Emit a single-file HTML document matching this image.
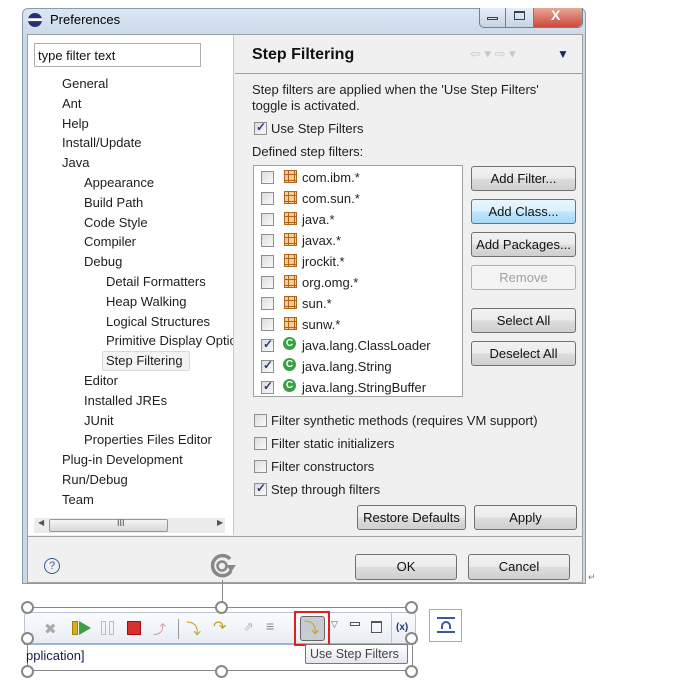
<!DOCTYPE html>
<html><head><meta charset="utf-8">
<style>
*{box-sizing:border-box;margin:0;padding:0}
body{width:676px;height:684px;background:#fff;position:relative;overflow:hidden;font-family:"Liberation Sans",sans-serif;font-size:13px;color:#1e1e1e}
.a{position:absolute;white-space:nowrap}
.btn{position:absolute;border:1px solid #707070;border-radius:3px;background:linear-gradient(#f2f2f2,#ebebeb 50%,#dddddd 51%,#cfcfcf);text-align:center;font-size:13px;color:#111}
.cb{position:absolute;width:13px;height:13px;border:1px solid #8e8f8f;background:linear-gradient(135deg,#dcdcdc,#fafafa);}
.cb.on::after{content:"✓";position:absolute;left:1px;top:-3px;font-size:12px;color:#2a3a8a;font-weight:bold}
.pk{position:absolute;width:13px;height:13px;border:1px solid #b0651a;background:#f2cd9a}
.pk::before{content:"";position:absolute;left:3px;top:-1px;width:5px;height:13px;border-left:1px solid #b0651a;border-right:1px solid #b0651a}
.pk::after{content:"";position:absolute;top:3px;left:-1px;height:5px;width:13px;border-top:1px solid #b0651a;border-bottom:1px solid #b0651a}
.cl{position:absolute;width:13px;height:13px;border-radius:50%;background:#3aa046;color:#fff;font-size:10px;font-weight:bold;line-height:13px;text-align:center}
.h{position:absolute;width:13px;height:13px;border:2px solid #888;border-radius:50%;background:#fff}
</style></head><body>
<div class="a" style="left:22px;top:8px;width:564px;height:576px;background:linear-gradient(#dbe6f3,#c9d7e8 30px,#c9d7e8);border:1px solid #8a9bb0;border-radius:6px 6px 0 0"></div>
<div class="a" style="left:28px;top:13px;width:14px;height:14px;border-radius:50%;background:linear-gradient(#2c2f6e 0,#2c2f6e 35%,#fff 40%,#fff 55%,#2c2f6e 60%)"></div>
<div class="a" style="left:50px;top:12px;font-size:13px;color:#000">Preferences</div>
<div class="a" style="left:479px;top:8px;width:104px;height:20px;border:1px solid #6f7f94;border-top:none;border-radius:0 0 5px 5px;background:linear-gradient(#e8eef6,#c7d3e2)"></div>
<div class="a" style="left:505px;top:8px;width:1px;height:19px;background:#6f7f94"></div>
<div class="a" style="left:533px;top:8px;width:1px;height:19px;background:#6f7f94"></div>
<div class="a" style="left:534px;top:8px;width:48px;height:19px;background:linear-gradient(#e8a898,#c9493a);border-radius:0 0 5px 0"></div>
<div class="a" style="left:487px;top:17px;width:11px;height:3px;border:1px solid #345"></div>
<div class="a" style="left:514px;top:11px;width:11px;height:9px;border:1px solid #345;border-top-width:2px"></div>
<div class="a" style="left:551px;top:7px;color:#fff;font-weight:bold;font-size:14px">X</div>
<div class="a" style="left:27px;top:34px;width:556px;height:549px;background:#f0f0f0;border:1px solid #a0a0a0"></div>
<div class="a" style="left:28px;top:35px;width:206px;height:500px;background:#fff;border-right:1px solid #c8c8c8"></div>
<div class="a" style="left:34px;top:43px;width:167px;height:24px;border:1px solid #abadb3;background:#fff;padding:4px 3px;font-size:13px;color:#111">type filter text</div>
<div class="a" style="left:0;top:1px;line-height:19.8px">
<div class="a" style="left:62px;top:73px">General</div>
<div class="a" style="left:62px;top:93px">Ant</div>
<div class="a" style="left:62px;top:113px">Help</div>
<div class="a" style="left:62px;top:132px">Install/Update</div>
<div class="a" style="left:62px;top:152px">Java</div>
<div class="a" style="left:84px;top:172px">Appearance</div>
<div class="a" style="left:84px;top:192px">Build Path</div>
<div class="a" style="left:84px;top:212px">Code Style</div>
<div class="a" style="left:84px;top:231px">Compiler</div>
<div class="a" style="left:84px;top:251px">Debug</div>
<div class="a" style="left:106px;top:271px">Detail Formatters</div>
<div class="a" style="left:106px;top:291px">Heap Walking</div>
<div class="a" style="left:106px;top:311px">Logical Structures</div>
<div class="a" style="left:106px;top:330px;width:127px;overflow:hidden">Primitive Display Options</div>
<div class="a" style="left:102px;top:350px;width:88px;height:20px;border:1px solid #d9d9d9;border-radius:2px;background:#f3f3f3"></div>
<div class="a" style="left:106px;top:350px">Step Filtering</div>
<div class="a" style="left:84px;top:370px">Editor</div>
<div class="a" style="left:84px;top:390px">Installed JREs</div>
<div class="a" style="left:84px;top:410px">JUnit</div>
<div class="a" style="left:84px;top:429px">Properties Files Editor</div>
<div class="a" style="left:62px;top:449px">Plug-in Development</div>
<div class="a" style="left:62px;top:469px">Run/Debug</div>
<div class="a" style="left:62px;top:489px">Team</div>
</div>
<div class="a" style="left:34px;top:518px;width:191px;height:15px;background:#ececec"></div>
<div class="a" style="left:38px;top:518px;font-size:8px;color:#555">◀</div>
<div class="a" style="left:217px;top:518px;font-size:8px;color:#555">▶</div>
<div class="a" style="left:49px;top:519px;width:119px;height:13px;border:1px solid #989898;border-radius:2px;background:linear-gradient(#f4f4f4,#d8d8d8)"></div>
<div class="a" style="left:117px;top:518px;font-size:9px;color:#444">III</div>
<div class="a" style="left:252px;top:46px;font-size:16px;font-weight:bold;color:#111">Step Filtering</div>
<div class="a" style="left:470px;top:46px;font-size:13px;color:#c8c8c8">⇦ ▾ ⇨ ▾</div>
<div class="a" style="left:557px;top:47px;font-size:12px;color:#1a2a5a">▼</div>
<div class="a" style="left:235px;top:73px;width:347px;height:1px;background:#a0a0a0"></div>
<div class="a" style="left:252px;top:82px;line-height:16px">Step filters are applied when the 'Use Step Filters'<br>toggle is activated.</div>
<div class="cb on" style="left:254px;top:122px"></div>
<div class="a" style="left:271px;top:121px">Use Step Filters</div>
<div class="a" style="left:252px;top:144px">Defined step filters:</div>
<div class="a" style="left:253px;top:165px;width:210px;height:232px;background:#fff;border:1px solid #a0a0a0"></div>
<div class="cb" style="left:261px;top:171px"></div><div class="pk" style="left:284px;top:170px"></div><div class="a" style="left:302px;top:170px">com.ibm.*</div>
<div class="cb" style="left:261px;top:192px"></div><div class="pk" style="left:284px;top:191px"></div><div class="a" style="left:302px;top:191px">com.sun.*</div>
<div class="cb" style="left:261px;top:213px"></div><div class="pk" style="left:284px;top:212px"></div><div class="a" style="left:302px;top:212px">java.*</div>
<div class="cb" style="left:261px;top:234px"></div><div class="pk" style="left:284px;top:233px"></div><div class="a" style="left:302px;top:233px">javax.*</div>
<div class="cb" style="left:261px;top:255px"></div><div class="pk" style="left:284px;top:254px"></div><div class="a" style="left:302px;top:254px">jrockit.*</div>
<div class="cb" style="left:261px;top:276px"></div><div class="pk" style="left:284px;top:275px"></div><div class="a" style="left:302px;top:275px">org.omg.*</div>
<div class="cb" style="left:261px;top:297px"></div><div class="pk" style="left:284px;top:296px"></div><div class="a" style="left:302px;top:296px">sun.*</div>
<div class="cb" style="left:261px;top:318px"></div><div class="pk" style="left:284px;top:317px"></div><div class="a" style="left:302px;top:317px">sunw.*</div>
<div class="cb on" style="left:261px;top:339px"></div><div class="cl" style="left:283px;top:337px">C</div><div class="a" style="left:302px;top:338px">java.lang.ClassLoader</div>
<div class="cb on" style="left:261px;top:360px"></div><div class="cl" style="left:283px;top:358px">C</div><div class="a" style="left:302px;top:359px">java.lang.String</div>
<div class="cb on" style="left:261px;top:381px"></div><div class="cl" style="left:283px;top:379px">C</div><div class="a" style="left:302px;top:380px">java.lang.StringBuffer</div>
<div class="btn" style="left:471px;top:166px;width:105px;height:25px;line-height:23px">Add Filter...</div>
<div class="btn" style="left:471px;top:199px;width:105px;height:25px;line-height:23px;border-color:#3c7fb1;background:linear-gradient(#eaf6fd,#d9f0fc 50%,#bee6fd 51%,#a7d9f5)">Add Class...</div>
<div class="btn" style="left:471px;top:232px;width:105px;height:25px;line-height:23px">Add Packages...</div>
<div class="btn" style="left:471px;top:265px;width:105px;height:25px;line-height:23px;background:#f4f4f4;border-color:#adb2b5;color:#a0a0a0">Remove</div>
<div class="btn" style="left:471px;top:308px;width:105px;height:25px;line-height:23px">Select All</div>
<div class="btn" style="left:471px;top:341px;width:105px;height:25px;line-height:23px">Deselect All</div>
<div class="cb" style="left:254px;top:414px"></div><div class="a" style="left:271px;top:413px">Filter synthetic methods (requires VM support)</div>
<div class="cb" style="left:254px;top:437px"></div><div class="a" style="left:271px;top:436px">Filter static initializers</div>
<div class="cb" style="left:254px;top:460px"></div><div class="a" style="left:271px;top:459px">Filter constructors</div>
<div class="cb on" style="left:254px;top:483px"></div><div class="a" style="left:271px;top:482px">Step through filters</div>
<div class="btn" style="left:357px;top:505px;width:109px;height:25px;line-height:23px">Restore Defaults</div>
<div class="btn" style="left:474px;top:505px;width:103px;height:25px;line-height:23px">Apply</div>
<div class="a" style="left:28px;top:536px;width:554px;height:1px;background:#a0a0a0"></div>
<div class="a" style="left:44px;top:558px;width:16px;height:16px;border:1px solid #3a5a9a;border-radius:50%;text-align:center;font-size:11px;line-height:14px;color:#3a5a9a">?</div>
<div class="btn" style="left:355px;top:554px;width:102px;height:26px;line-height:24px">OK</div>
<div class="btn" style="left:468px;top:554px;width:102px;height:26px;line-height:24px">Cancel</div>
<svg class="a" style="left:206px;top:551px" width="32" height="30" viewBox="0 0 32 30"><path d="M24 8 A10 10 0 1 0 25 20" fill="none" stroke="#888" stroke-width="3.5"/><circle cx="16" cy="15" r="4.5" fill="none" stroke="#888" stroke-width="2.5"/><path d="M20 14 L30 14 L25 21 Z" fill="#888"/></svg>
<div class="a" style="left:588px;top:572px;font-size:9px;color:#777">↵</div>
<div class="a" style="left:222px;top:580px;width:1px;height:27px;background:#888"></div>
<div class="a" style="left:27px;top:607px;width:386px;height:64px;border:1px solid #888"></div>
<div class="a" style="left:24px;top:612px;width:392px;height:32px;background:linear-gradient(#fafbfd,#e8edf4);border:1px solid #b8c4d4;border-radius:4px 4px 0 0"></div>
<div class="a" style="left:24px;top:643px;width:388px;height:2px;background:#9db4d4"></div>
<div class="a" style="left:44px;top:620px;font-size:15px;color:#aaa">✖</div>
<div class="a" style="left:72px;top:621px;width:6px;height:14px;background:#d8b020;border:1px solid #a08010"></div>
<div class="a" style="left:79px;top:621px;width:0;height:0;border-left:12px solid #3aa046;border-top:7px solid transparent;border-bottom:7px solid transparent"></div>
<div class="a" style="left:101px;top:621px;width:5px;height:14px;border:1px solid #bbb"></div>
<div class="a" style="left:109px;top:621px;width:5px;height:14px;border:1px solid #bbb"></div>
<div class="a" style="left:127px;top:621px;width:14px;height:14px;background:#d83030;border:1px solid #a01010"></div>
<div class="a" style="left:153px;top:619px;font-size:13px;color:#c99">⤴</div>
<div class="a" style="left:178px;top:619px;width:1px;height:20px;background:#999"></div>
<div class="a" style="left:186px;top:618px;font-size:15px;color:#c8a020">⤵</div>
<div class="a" style="left:213px;top:617px;font-size:16px;color:#c8a020">↷</div>
<div class="a" style="left:243px;top:619px;font-size:13px;color:#bbb">⇗</div>
<div class="a" style="left:266px;top:618px;font-size:14px;color:#888">≡</div>
<div class="a" style="left:300px;top:616px;width:25px;height:25px;border:1px solid #666;border-radius:3px;background:#c8ccd2"></div>
<div class="a" style="left:304px;top:617px;font-size:15px;color:#c8a020">⤵</div>
<div class="a" style="left:294px;top:611px;width:36px;height:35px;border:2px solid #e02020"></div>
<div class="a" style="left:331px;top:619px;font-size:9px;color:#666">▽</div>
<div class="a" style="left:350px;top:622px;width:10px;height:4px;border:1px solid #555"></div>
<div class="a" style="left:371px;top:621px;width:11px;height:12px;border:1px solid #555;border-top-width:2px"></div>
<div class="a" style="left:391px;top:613px;width:1px;height:30px;background:#b8c4d4"></div>
<div class="a" style="left:396px;top:622px;font-size:10px;font-weight:bold;color:#1a3a7a">(x)</div>
<div class="a" style="left:429px;top:609px;width:33px;height:33px;border:1px solid #aaa;background:#fff"></div>
<div class="a" style="left:437px;top:617px;width:18px;height:16px;border-top:2px solid #3a5a9a;border-bottom:2px solid #3a5a9a"></div>
<div class="a" style="left:441px;top:621px;width:10px;height:8px;border:2px solid #3a5a9a;border-bottom:none;border-radius:5px 5px 0 0"></div>
<div class="a" style="left:26px;top:648px;font-size:13px;color:#1a1a4a">pplication]</div>
<div class="a" style="left:305px;top:644px;width:103px;height:20px;border:1px solid #777;border-radius:2px;background:linear-gradient(#fff,#e4e5f0);padding:2px 4px;font-size:12.5px;color:#444">Use Step Filters</div>
<div class="h" style="left:21px;top:601px"></div>
<div class="h" style="left:215px;top:601px"></div>
<div class="h" style="left:405px;top:601px"></div>
<div class="h" style="left:21px;top:632px"></div>
<div class="h" style="left:405px;top:632px"></div>
<div class="h" style="left:21px;top:665px"></div>
<div class="h" style="left:215px;top:665px"></div>
<div class="h" style="left:405px;top:665px"></div>
</body></html>
